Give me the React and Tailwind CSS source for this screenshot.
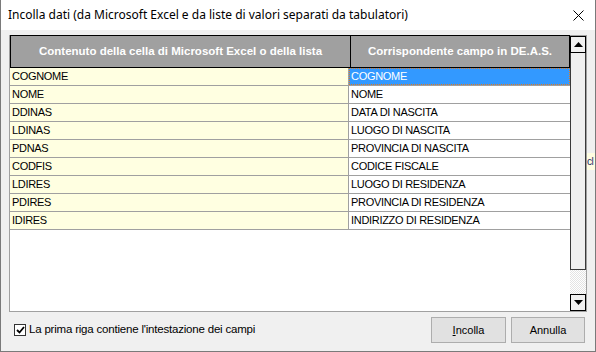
const rows = [
  ["COGNOME", "COGNOME"],
  ["NOME", "NOME"],
  ["DDINAS", "DATA DI NASCITA"],
  ["LDINAS", "LUOGO DI NASCITA"],
  ["PDNAS", "PROVINCIA DI NASCITA"],
  ["CODFIS", "CODICE FISCALE"],
  ["LDIRES", "LUOGO DI RESIDENZA"],
  ["PDIRES", "PROVINCIA DI RESIDENZA"],
  ["IDIRES", "INDIRIZZO DI RESIDENZA"],
];

const ui = { fontFamily: '"Liberation Sans", Arial, sans-serif' };

function Arrow({ up }) {
  return (
    <svg width="9" height="5" viewBox="0 0 9 5" aria-hidden="true">
      <path d={up ? "M0 5 L4.5 0 L9 5 Z" : "M0 0 L4.5 5 L9 0 Z"} fill="#000" />
    </svg>
  );
}

function ScrollBar() {
  return (
    <div className="flex w-[17px] flex-col border-y border-r border-[#a0a0a0] bg-[#f0f0f0]">
      <div className="flex h-[17px] items-center justify-center border border-black bg-[#f0f0f0]">
        <Arrow up />
      </div>
      <div className="h-[217px] border-x border-b border-[#3a3a3a] bg-[#f0f0f0]" />
      <div className="flex-1 bg-[repeating-conic-gradient(#ffffff_0_25%,#e3e3e3_0_50%)] bg-[length:2px_2px]" />
      <div className="flex h-[17px] items-center justify-center border border-black bg-[#f0f0f0]">
        <Arrow />
      </div>
    </div>
  );
}

function Grid() {
  return (
    <div className="flex h-[277px]">
      <div className="flex w-[561px] flex-col border-b border-l border-[#a0a0a0] bg-white">
        <div className="flex h-[33px] border border-black bg-[#a0a0a0] text-[11.5px] font-bold text-white">
          <div className="flex w-[340px] items-center justify-center border-r border-black">
            Contenuto della cella di Microsoft Excel o della lista
          </div>
          <div className="flex flex-1 items-center justify-center">Corrispondente campo in DE.A.S.</div>
        </div>
        {rows.map(([src, dst], i) => (
          <div key={src} className="flex h-[18px] border-b border-[#a0a0a0] text-[11px] leading-[17px] tracking-[-0.3px] text-black">
            <div className="w-[339px] border-r border-[#a0a0a0] bg-[#ffffe1] pl-[2px]">{src}</div>
            {i === 0 ? (
              <div className="flex-1 border border-dotted border-[#e07a1f] bg-[#3399ff] pl-[1px] leading-[15px] text-white">
                {dst}
              </div>
            ) : (
              <div className="flex-1 pl-[2px]">{dst}</div>
            )}
          </div>
        ))}
      </div>
      <ScrollBar />
    </div>
  );
}

export default function App() {
  return (
    <div
      className="relative flex h-[352px] w-[596px] flex-col overflow-hidden border-x border-b border-[#7a7a7a] bg-[#f0f0f0]"
      style={ui}
    >
      <div className="flex h-[30px] items-center justify-between bg-white pl-[7px] pr-[11px]">
        <span className="text-[12px] text-black" style={{ fontFamily: '"Noto Sans", "Open Sans", sans-serif' }}>
          Incolla dati (da Microsoft Excel e da liste di valori separati da tabulatori)
        </span>
        <svg width="11" height="11" viewBox="0 0 11 11" aria-hidden="true">
          <path d="M0.5 0.5 L10.5 10.5 M10.5 0.5 L0.5 10.5" stroke="#000" strokeWidth="1" />
        </svg>
      </div>

      <div className="pl-[8px] pt-[5px]">
        <Grid />
      </div>

      <div className="flex items-center justify-between pl-[13px] pr-[10px] pt-[5px]">
        <label className="flex items-center gap-[3px] text-[11.5px] tracking-[-0.2px] text-black">
          <span className="flex h-[12px] w-[12px] items-center justify-center border border-[#333] bg-white">
            <svg width="9" height="8" viewBox="0 0 9 8" aria-hidden="true">
              <path d="M1 4 L3.5 6.5 L8 1" stroke="#000" strokeWidth="1.8" fill="none" />
            </svg>
          </span>
          La prima riga contiene l'intestazione dei campi
        </label>
        <div className="flex gap-[5px]">
          <button className="h-[26px] w-[75px] border border-[#adadad] bg-[#e1e1e1] text-[11px] text-black">
            <span className="underline">I</span>ncolla
          </button>
          <button className="h-[26px] w-[74px] border border-[#adadad] bg-[#e1e1e1] text-[11px] text-black">
            Annulla
          </button>
        </div>
      </div>

      <div className="absolute left-[586px] top-[153px] h-[17px] w-[9px] bg-[#fffde1] text-[10px] leading-[17px] tracking-[-0.5px] text-[#1a2a6a]">
        cl
      </div>
    </div>
  );
}
